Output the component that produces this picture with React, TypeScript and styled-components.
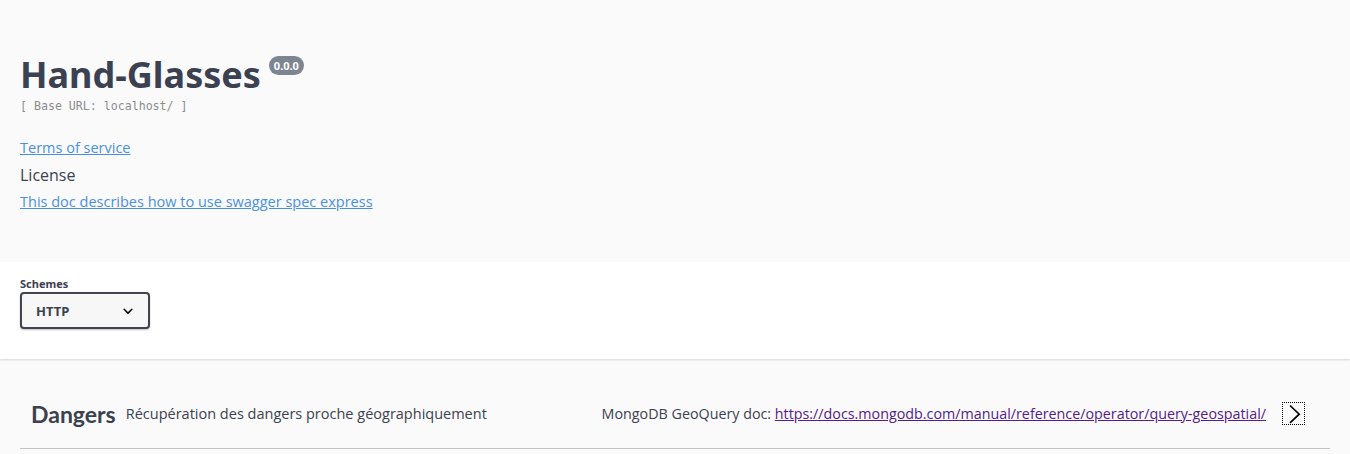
import React from "react";
import styled, { createGlobalStyle } from "styled-components";

const Global = createGlobalStyle`
  html, body { margin: 0; padding: 0; }
  body { background: #fafafa; font-family: "Open Sans", sans-serif; color: #3b4151; }
`;

const Wrapper = styled.div`
  box-sizing: border-box;
  width: 100%;
  padding: 0 20px;
`;

const Info = styled.div`
  margin: 50px 0 49px;
`;

const Hgroup = styled.div`
  margin: 0 0 24px;
`;

const Title = styled.h2`
  margin: 0;
  font-family: "Noto Sans", sans-serif;
  font-size: 36px;
  font-weight: 700;
  color: #3b4151;
  line-height: 49px;
`;

const Version = styled.small`
  position: relative;
  top: -5px;
  display: inline-block;
  margin: 0 0 0 8px;
  padding: 2px 5px;
  vertical-align: super;
  border-radius: 57px;
  background: #7d8492;
  font-size: 11px;
  line-height: 15px;
  color: #fff;
  font-family: "Noto Sans", sans-serif;
  font-weight: 700;
`;

const BaseUrl = styled.pre`
  margin: 0;
  font-family: "DejaVu Sans Mono", monospace;
  font-size: 11.6px;
  line-height: 14px;
  color: #8a8c90;
`;

const Meta = styled.div`
  display: flex;
  flex-direction: column;
  gap: 5px;
  align-items: flex-start;
`;

const InfoLink = styled.a<{ $dark?: boolean }>`
  font-family: "Open Sans", sans-serif;
  font-size: ${(p) => (p.$dark ? "16px" : "14.5px")};
  line-height: 22px;
  color: ${(p) => (p.$dark ? "#3b4151" : "#4990e2")};
  text-decoration: ${(p) => (p.$dark ? "none" : "underline")};
`;

const SchemeContainer = styled.div`
  background: #fff;
  box-shadow: 0 1px 2px 0 rgba(0, 0, 0, 0.15);
  padding: 30px 0;
  margin: 0 0 20px;
`;

const Schemes = styled.div`
  display: flex;
  align-items: flex-end;
`;

const SchemeLabel = styled.label`
  display: flex;
  flex-direction: column;
  margin: -17px 15px 0 0;
  font-family: "Noto Sans", sans-serif;
  font-size: 11px;
  font-weight: 700;
  line-height: 17px;
  color: #3b4151;
`;

const SelectBox = styled.div`
  position: relative;
  width: 130px;
`;

const Select = styled.select`
  appearance: none;
  -webkit-appearance: none;
  box-sizing: border-box;
  width: 130px;
  height: 37px;
  padding: 0 40px 0 14px;
  border: 2px solid #41444e;
  border-radius: 4px;
  background: #f7f7f7;
  box-shadow: 0 1px 2px 0 rgba(0, 0, 0, 0.25);
  font-family: "Noto Sans", sans-serif;
  font-size: 13px;
  font-weight: 700;
  color: #3b4151;
  outline: none;
`;

const SelectArrow = styled.svg`
  position: absolute;
  right: 12px;
  top: 9px;
  width: 20px;
  height: 20px;
  pointer-events: none;
`;

const TagRow = styled.div`
  display: flex;
  align-items: center;
  height: 49px;
  padding: 10px 20px 10px 10px;
  border-bottom: 1px solid rgba(59, 65, 81, 0.3);
`;

const TagName = styled.span`
  font-family: "Lato", sans-serif;
  font-size: 23px;
  font-weight: 700;
  color: #3b4151;
  padding-left: 1px;
`;

const TagDesc = styled.small`
  flex: 1;
  padding: 0 10px;
  font-family: "Open Sans", sans-serif;
  font-size: 14.5px;
  color: #3b4151;
`;

const ExternalDocs = styled.div`
  font-family: "Open Sans", sans-serif;
  font-size: 14.3px;
  color: #3b4151;
`;

const DocLink = styled.a`
  color: #551a8b;
  text-decoration: underline;
`;

const ExpandButton = styled.button`
  display: flex;
  align-items: center;
  justify-content: center;
  width: 23px;
  height: 23px;
  margin: 0 5px 0 16px;
  padding: 0;
  border: 1px dotted #000;
  background: none;
  cursor: pointer;
`;

export default function App() {
  return (
    <>
      <Global />
      <Wrapper>
        <Info>
          <Hgroup>
            <Title>
              Hand-Glasses
              <Version>0.0.0</Version>
            </Title>
            <BaseUrl>[ Base URL: localhost/ ]</BaseUrl>
          </Hgroup>
          <Meta>
            <InfoLink href="#">Terms of service</InfoLink>
            <InfoLink $dark>License</InfoLink>
            <InfoLink href="#">This doc describes how to use swagger spec express</InfoLink>
          </Meta>
        </Info>
      </Wrapper>
      <SchemeContainer>
        <Wrapper>
          <Schemes>
            <SchemeLabel>
              <span>Schemes</span>
              <SelectBox>
                <Select defaultValue="http">
                  <option value="http">HTTP</option>
                </Select>
                <SelectArrow viewBox="0 0 20 20">
                  <path
                    fill="#000"
                    d="M13.418 7.859a.695.695 0 01.978 0 .68.68 0 010 .969l-3.908 3.83a.697.697 0 01-.979 0l-3.908-3.83a.68.68 0 010-.969.695.695 0 01.978 0L10 11l3.418-3.141z"
                  />
                </SelectArrow>
              </SelectBox>
            </SchemeLabel>
          </Schemes>
        </Wrapper>
      </SchemeContainer>
      <Wrapper>
        <TagRow>
          <TagName>Dangers</TagName>
          <TagDesc>Récupération des dangers proche géographiquement</TagDesc>
          <ExternalDocs>
            MongoDB GeoQuery doc:{" "}
            <DocLink href="#">https://docs.mongodb.com/manual/reference/operator/query-geospatial/</DocLink>
          </ExternalDocs>
          <ExpandButton>
            <svg width="20" height="20" viewBox="0 0 20 20">
              <path d="M6 1.5L15.2 10.2L6 18.8" fill="none" stroke="#000" strokeWidth="1.7" />
            </svg>
          </ExpandButton>
        </TagRow>
      </Wrapper>
    </>
  );
}
